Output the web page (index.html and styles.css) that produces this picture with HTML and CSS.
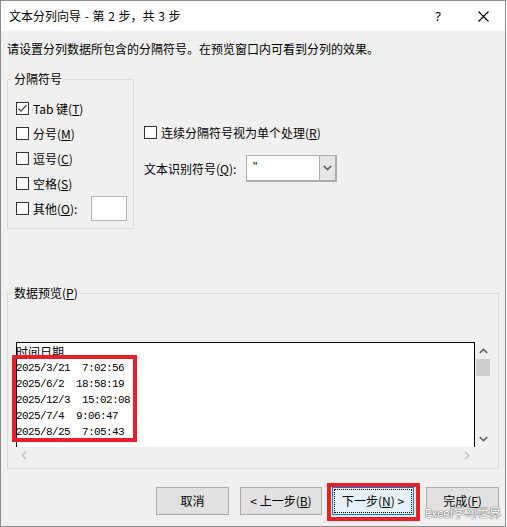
FILE: index.html
```html
<!DOCTYPE html>
<html lang="zh-CN">
<head>
<meta charset="utf-8">
<title>文本分列向导</title>
<link rel="stylesheet" href="styles.css">
</head>
<body>
<div class="window">
  <div class="titlebar">
    <span class="title">文本分列向导 - 第 2 步，共 3 步</span>
    <span class="help">?</span>
    <span class="close"><svg width="11" height="11" viewBox="0 0 11 11"><path d="M0.5 0.5L10.5 10.5M10.5 0.5L0.5 10.5" stroke="#000" stroke-width="1.1" fill="none"/></svg></span>
  </div>
  <div class="content">
    <p class="intro">请设置分列数据所包含的分隔符号。在预览窗口内可看到分列的效果。</p>
    <div class="upper">
      <fieldset class="group sep">
        <legend>分隔符号</legend>
        <div class="opt"><span class="cb"><svg width="11" height="11" viewBox="0 0 11 11"><path d="M1.5 5.5L4 8.2L9.5 2" stroke="#444" stroke-width="1.2" fill="none"/></svg></span><span>Tab 键(<u>T</u>)</span></div>
        <div class="opt"><span class="cb"></span><span>分号(<u>M</u>)</span></div>
        <div class="opt"><span class="cb"></span><span>逗号(<u>C</u>)</span></div>
        <div class="opt"><span class="cb"></span><span>空格(<u>S</u>)</span></div>
        <div class="opt"><span class="cb"></span><span>其他(<u>O</u>):</span><span class="other-input"></span></div>
      </fieldset>
      <div class="right">
        <div class="opt"><span class="cb"></span><span>连续分隔符号视为单个处理(<u>R</u>)</span></div>
        <div class="qual">
          <span class="qual-label">文本识别符号(<u>Q</u>):</span>
          <div class="combo"><span class="val">"</span><span class="drop"><svg width="9" height="6" viewBox="0 0 9 6"><path d="M0.8 1L4.5 4.6L8.2 1" stroke="#555" stroke-width="1.4" fill="none"/></svg></span></div>
        </div>
      </div>
    </div>
    <fieldset class="group preview">
      <legend>数据预览(<u>P</u>)</legend>
      <div class="pv">
        <div class="pv-main">
          <div class="pv-text">
            <div class="pv-hdr">时间日期</div>
            <div class="pv-row">2025/3/21  7:02:56</div>
            <div class="pv-row">2025/6/2  18:58:19</div>
            <div class="pv-row">2025/12/3  15:02:08</div>
            <div class="pv-row">2025/7/4  9:06:47</div>
            <div class="pv-row">2025/8/25  7:05:43</div>
          </div>
          <div class="vscroll">
            <span class="arr"><svg width="9" height="6" viewBox="0 0 9 6"><path d="M0.8 5L4.5 1.4L8.2 5" stroke="#606060" stroke-width="1.6" fill="none"/></svg></span>
            <span class="thumb"></span>
            <span class="vspace"></span>
            <span class="arr"><svg width="9" height="6" viewBox="0 0 9 6"><path d="M0.8 1L4.5 4.6L8.2 1" stroke="#606060" stroke-width="1.6" fill="none"/></svg></span>
          </div>
        </div>
        <div class="hscroll">
          <span class="arr"><svg width="6" height="9" viewBox="0 0 6 9"><path d="M5 0.8L1.4 4.5L5 8.2" stroke="#c2c2c2" stroke-width="1.6" fill="none"/></svg></span>
          <span class="arr"><svg width="6" height="9" viewBox="0 0 6 9"><path d="M1 0.8L4.6 4.5L1 8.2" stroke="#c2c2c2" stroke-width="1.6" fill="none"/></svg></span>
        </div>
      </div>
    </fieldset>
    <div class="buttons">
      <button class="btn w73">取消</button>
      <button class="btn w82 g11">&lt; 上一步(<u>B</u>)</button>
      <button class="btn w82 g10 default">下一步(<u>N</u>) &gt;<span class="mark-btn"></span></button>
      <button class="btn w73 g12">完成(<u>F</u>)</button>
    </div>
  </div>
  <div class="mark-data"></div>
  <div class="watermark">Excel学习世界</div>
</div>
</body>
</html>
```

FILE: styles.css
```css
body {
  margin: 0;
  background: #fff;
}

.window {
  position: relative;
  width: 506px;
  height: 527px;
  box-sizing: border-box;
  border: 1px solid #8c8c8c;
  background: #f0f0f0;
  display: flex;
  flex-direction: column;
  font-family: "Microsoft YaHei", "Noto Sans CJK SC", sans-serif;
  font-size: 12px;
  color: #000;
  overflow: hidden;
}

.titlebar {
  flex: none;
  height: 30px;
  background: #fff;
  display: flex;
  align-items: center;
  padding-left: 8px;
}

.title {
  flex: 1;
  line-height: 16px;
  word-spacing: 1px;
}

.help {
  width: 36px;
  margin-right: 10px;
  text-align: center;
  font-family: "Noto Sans", sans-serif;
  font-size: 13px;
  line-height: 16px;
}

.close {
  width: 34px;
  margin-right: 5px;
  display: flex;
  justify-content: center;
  align-items: center;
}

.content {
  flex: 1;
  padding: 0 6px;
  display: flex;
  flex-direction: column;
}

.intro {
  margin: 10px 0 0;
  line-height: 16px;
}

.upper {
  display: flex;
  margin-top: 15px;
}

fieldset.group {
  margin: 0;
  border: 1px solid #dcdcdc;
  min-width: 0;
}

fieldset.group legend {
  padding: 0 1px;
  margin-left: -3px;
  line-height: 14px;
}

fieldset.sep {
  width: 127px;
  box-sizing: border-box;
  padding: 10px 6px 7px 8px;
}

.opt {
  height: 25px;
  display: flex;
  align-items: center;
  line-height: 16px;
  white-space: nowrap;
}

.cb {
  flex: none;
  width: 13px;
  height: 13px;
  box-sizing: border-box;
  border: 1px solid #333;
  background: #fff;
  margin-right: 4px;
  display: flex;
}

.other-input {
  margin-left: auto;
  width: 36px;
  height: 25px;
  box-sizing: border-box;
  border: 1px solid #b4b4b4;
  background: #fff;
}

.right {
  margin-left: 10px;
  padding-top: 48px;
  display: flex;
  flex-direction: column;
}

.qual {
  display: flex;
  align-items: center;
  margin-top: 10px;
}

.qual-label {
  width: 102px;
  line-height: 16px;
}

.combo {
  width: 91px;
  height: 27px;
  box-sizing: border-box;
  border: 1px solid #acacac;
  border-right-width: 2px;
  border-bottom-width: 2px;
  background: #fff;
  display: flex;
}

.combo .val {
  flex: 1;
  padding-left: 6px;
  line-height: 22px;
  font-family: "Liberation Sans", sans-serif;
}

.combo .drop {
  width: 15px;
  background: #e6e6e6;
  border-left: 1px solid #acacac;
  display: flex;
  align-items: center;
  justify-content: center;
}

fieldset.preview {
  margin-top: 57px;
  padding: 42px 7px 5px 8px;
}

.pv {
  display: flex;
  flex-direction: column;
}

.pv-main {
  display: flex;
  height: 105px;
}

.pv-text {
  flex: 1;
  background: #fff;
  border: 1px solid #000;
  border-bottom: none;
  overflow: hidden;
  padding-top: 1px;
}

.pv-hdr {
  margin-left: -1px;
  font-family: "Noto Sans CJK SC", sans-serif;
  font-size: 12px;
  line-height: 16px;
}

.pv-row {
  margin-left: -1px;
  font-family: "Liberation Mono", monospace;
  font-size: 11px;
  letter-spacing: -0.6px;
  line-height: 16px;
  white-space: pre;
}

.vscroll {
  width: 16px;
  display: flex;
  flex-direction: column;
}

.vscroll .arr {
  height: 17px;
  display: flex;
  align-items: center;
  justify-content: center;
}

.thumb {
  height: 17px;
  margin: 0 1px;
  background: #cdcdcd;
}

.vspace {
  flex: 1;
}

.hscroll {
  height: 16px;
  padding-right: 16px;
  display: flex;
  justify-content: space-between;
}

.hscroll .arr {
  width: 16px;
  display: flex;
  align-items: center;
  justify-content: center;
}

.buttons {
  display: flex;
  justify-content: flex-end;
  margin-top: 18px;
}

.btn {
  position: relative;
  height: 28px;
  box-sizing: border-box;
  border: 1px solid #adadad;
  background: #e1e1e1;
  font: inherit;
  color: #000;
  padding: 0;
  display: flex;
  align-items: center;
  justify-content: center;
  line-height: 16px;
}

.w73 { width: 73px; }
.w82 { width: 82px; }
.g10 { margin-left: 10px; }
.g11 { margin-left: 11px; }
.g12 { margin-left: 12px; }

.btn.default {
  border-color: #0078d7;
  background: #e5f1fb;
}

.btn.default::after {
  content: "";
  position: absolute;
  inset: 1px;
  border: 1px dotted #000;
}

.mark-btn {
  position: absolute;
  top: -5px;
  left: -6px;
  right: -7px;
  bottom: -7px;
  border: 4px solid #e8202a;
}

.mark-data {
  position: absolute;
  left: 11px;
  top: 354px;
  width: 125px;
  height: 87px;
  box-sizing: border-box;
  border: 4px solid #e8202a;
}

.watermark {
  position: absolute;
  right: 4px;
  bottom: 5px;
  font-size: 12px;
  line-height: 16px;
  color: #fff;
  text-shadow: 0 0 1px #666, 0 0 1px #666, 0 0 1px #888;
}
```
